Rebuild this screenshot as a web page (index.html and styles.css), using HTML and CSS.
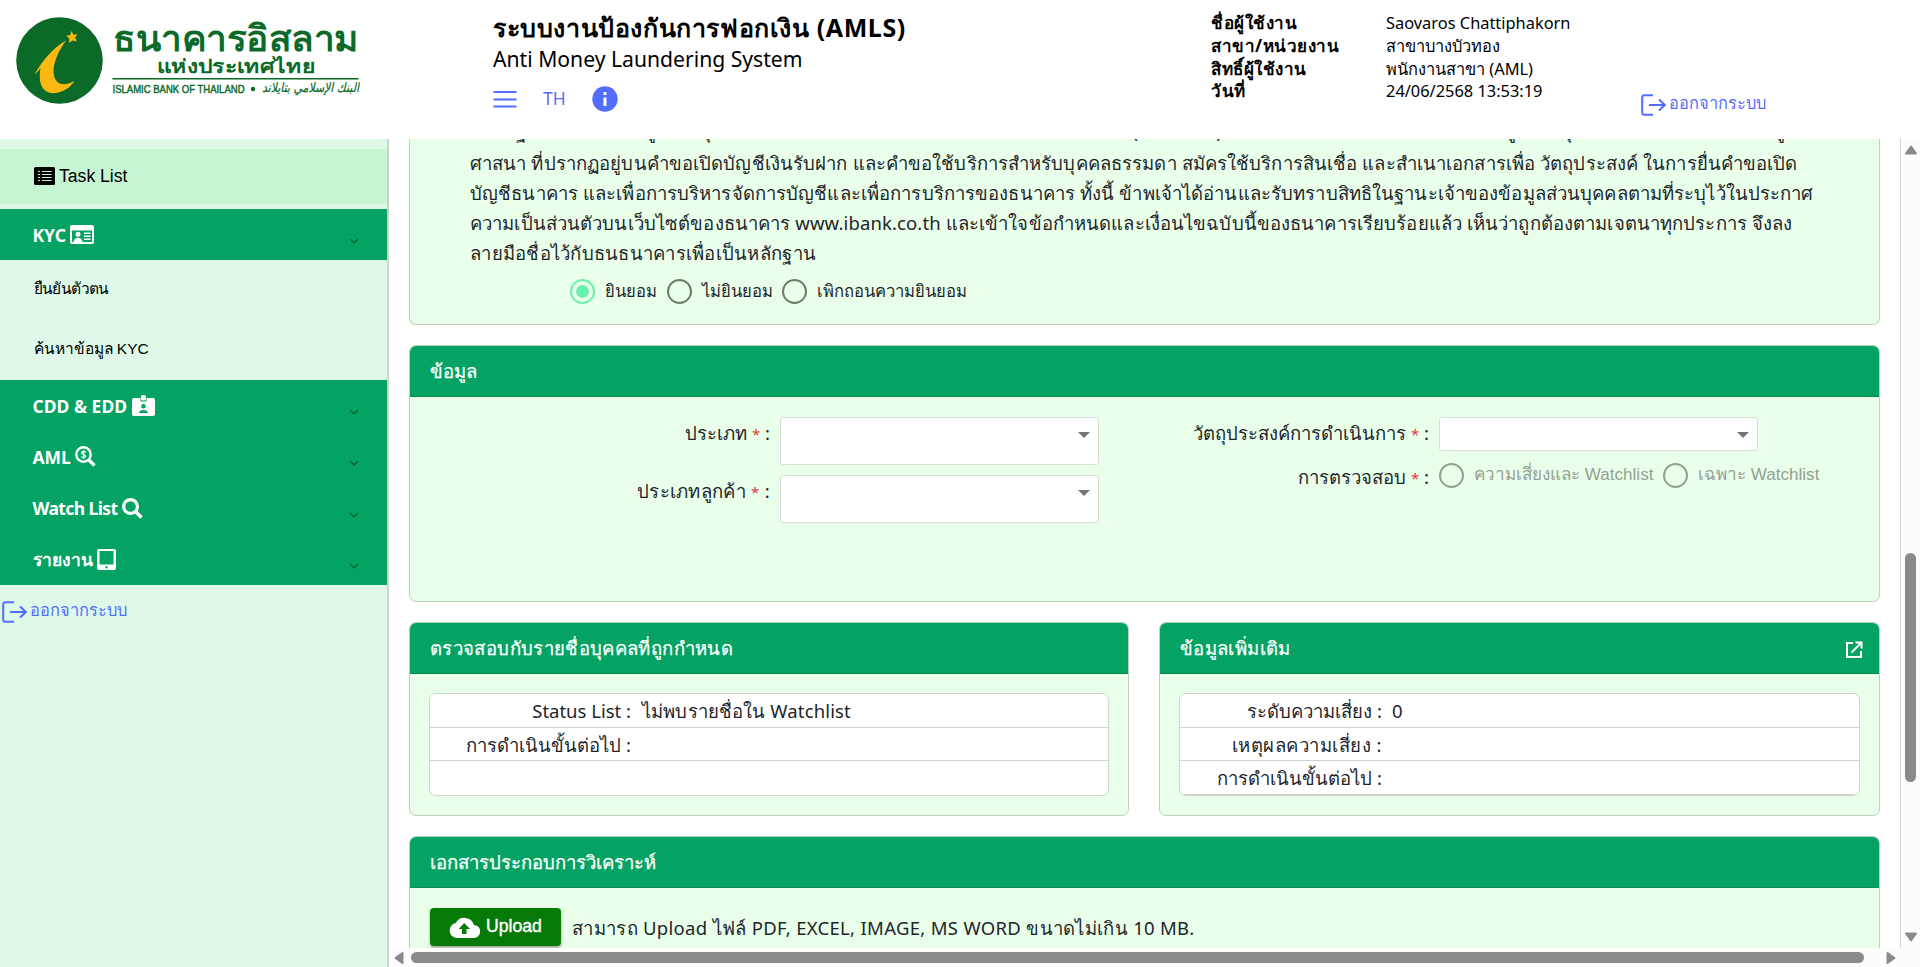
FILE: index.html
```html
<!DOCTYPE html>
<html lang="th">
<head>
<meta charset="utf-8">
<title>AMLS</title>
<link rel="stylesheet" href="styles.css">
</head>
<body>
<svg class="defs" width="0" height="0">
  <symbol id="i-logout" viewBox="0 0 26 22"><path d="M12 1.2H3.2a2 2 0 0 0-2 2v15.6a2 2 0 0 0 2 2H12" fill="none" stroke="currentColor" stroke-width="2"/><path d="M8 11h15.6M18 5.4 23.8 11 18 16.6" fill="none" stroke="currentColor" stroke-width="2.1"/></symbol>
  <symbol id="i-chev" viewBox="0 0 10 7"><path d="M1 1l4 4 4-4" fill="none" stroke="#0b5a22" stroke-width="1.2"/></symbol>
</svg>
<header class="top">
  <div class="brand">
    <svg width="360" height="110" viewBox="0 0 360 110">
      <circle cx="59.500" cy="60.500" r="43.300" fill="#0b6a27"/>
      <path d="M66 40.500C53 48 42 61 34.500 74.500c2-1.500 4-3.500 6-6.500-1.500 9-1 17 4 22 4 3.500 9 4 14 2.500 6-1.500 12-5.500 16-11.500-7 4-14 4.500-18 0-5-6-3-17 1-26 2.500-6 5.500-10 8.500-14.500Z" fill="#fdb913"/>
      <path d="M71.500 31l1.900 3.700 4.100-.4-2.400 3.300 1.700 3.900-4.200-1-3.600 2.200.2-4.200-3-2.700 4.100-.8Z" fill="#fdb913"/>
      <g fill="#0b6a27">
        <text x="113" y="51" textLength="246" lengthAdjust="spacingAndGlyphs" class="lg-a">ธนาคารอิสลาม</text>
        <text x="157" y="72.500" textLength="158" lengthAdjust="spacingAndGlyphs" class="lg-b">แห่งประเทศไทย</text>
        <rect x="112.500" y="78" width="246" height="1.500"/>
        <text x="112.500" y="92.500" textLength="132" lengthAdjust="spacingAndGlyphs" class="lg-c">ISLAMIC BANK OF THAILAND</text>
        <circle cx="253" cy="89" r="2.200"/>
        <text x="262" y="92" textLength="97" lengthAdjust="spacingAndGlyphs" class="lg-d">البنك الإسلامي بتايلاند</text>
      </g>
    </svg>
  </div>
  <div class="titles">
    <h1>ระบบงานป้องกันการฟอกเงิน (AMLS)</h1>
    <p class="sub">Anti Money Laundering System</p>
    <div class="tools">
      <svg width="24" height="18" viewBox="0 0 24 18"><path d="M.5 2h23M.5 9.500h23M.5 16.500h23" stroke="currentColor" stroke-width="2.200"/></svg>
      <span class="lang">TH</span>
      <svg width="26" height="26" viewBox="0 0 26 26"><circle cx="13" cy="13" r="12.700" fill="currentColor"/><path d="M11.500 6h3v3h-3zM11.500 11.500h3V20h-3z" fill="#fff"/></svg>
    </div>
  </div>
  <dl class="user">
    <dt>ชื่อผู้ใช้งาน</dt><dd>Saovaros Chattiphakorn</dd>
    <dt>สาขา/หน่วยงาน</dt><dd>สาขาบางบัวทอง</dd>
    <dt>สิทธิ์ผู้ใช้งาน</dt><dd>พนักงานสาขา (AML)</dd>
    <dt>วันที่</dt><dd>24/06/2568 13:53:19</dd>
  </dl>
  <a class="logout"><svg width="26" height="22"><use href="#i-logout"/></svg><span>ออกจากระบบ</span></a>
</header>
<div class="body">
  <nav class="side">
    <a class="task"><svg width="21" height="18" viewBox="0 0 21 18"><rect width="21" height="18" rx="1.500" fill="#000"/><path d="M4 4.500h2M8 4.500h9.500M4 7.500h2M8 7.500h9.500M4 10.500h2M8 10.500h9.500M4 13.500h2M8 13.500h9.500" stroke="#c5f5d2" stroke-width="1.200"/></svg><span>Task List</span></a>
    <a class="group kyc"><b>KYC</b>
      <svg width="24" height="19" viewBox="0 0 24 19"><path fill="#fff" fill-rule="evenodd" d="M2 0h20a2 2 0 0 1 2 2v15a2 2 0 0 1-2 2H2a2 2 0 0 1-2-2V2a2 2 0 0 1 2-2ZM2 5.500V17h20V5.500Z"/><circle cx="8" cy="9.300" r="2.500" fill="#fff"/><path d="M3.500 17.200c0-6 9-6 9 0ZM14 7.500h6.500V9H14zM14 10.500h6.500V12H14zM14 13.500h6.500V15H14z" fill="#fff"/></svg>
      <svg class="chev" width="10" height="7"><use href="#i-chev"/></svg></a>
    <div class="subs"><a class="s1">ยืนยันตัวตน</a><a class="s2">ค้นหาข้อมูล KYC</a></div>
    <a class="group"><b class="cdd">CDD &amp; EDD</b>
      <svg width="23" height="21" viewBox="0 0 23 21"><path fill="#fff" fill-rule="evenodd" d="M2 3h6.500v3.500h6V3H21a2 2 0 0 1 2 2v14a2 2 0 0 1-2 2H2a2 2 0 0 1-2-2V5a2 2 0 0 1 2-2Zm9.500 6a2.300 2.300 0 1 0 0 4.600 2.300 2.300 0 0 0 0-4.600ZM7 18h9c0-4-9-4-9 0Z"/><rect x="9" width="5" height="5.500" rx="1.500" fill="#fff"/></svg>
      <svg class="chev" width="10" height="7"><use href="#i-chev"/></svg></a>
    <a class="group"><b>AML</b>
      <svg width="21" height="21" viewBox="0 0 21 21"><circle cx="8.500" cy="8.500" r="7.200" fill="none" stroke="#fff" stroke-width="2.400"/><path d="M14 14l5.500 5.500" stroke="#fff" stroke-width="3.400"/><path d="M10.800 6.500C10 5 6.500 5 6.500 6.900c0 2 4.200 1.200 4.200 3.200 0 1.900-3.700 2-4.500.4M8.600 4v9" fill="none" stroke="#fff" stroke-width="1.300"/></svg>
      <svg class="chev" width="10" height="7"><use href="#i-chev"/></svg></a>
    <a class="group"><b class="watch">Watch List</b>
      <svg width="21" height="21" viewBox="0 0 21 21"><circle cx="8.500" cy="8.500" r="6.900" fill="none" stroke="#fff" stroke-width="3.200"/><path d="M13.500 13.500l6 6" stroke="#fff" stroke-width="3.600"/></svg>
      <svg class="chev" width="10" height="7"><use href="#i-chev"/></svg></a>
    <a class="group"><b>รายงาน</b>
      <svg width="19" height="21" viewBox="0 0 19 21"><path fill="#fff" fill-rule="evenodd" d="M2 0h15a2 2 0 0 1 2 2v17a2 2 0 0 1-2 2H2a2 2 0 0 1-2-2V2a2 2 0 0 1 2-2Zm.5 2v13.500h14V2Zm7 15a1.200 1.200 0 1 0 0 2.400 1.200 1.200 0 0 0 0-2.400Z"/></svg>
      <svg class="chev" width="10" height="7"><use href="#i-chev"/></svg></a>
    <a class="logout"><svg width="26" height="22"><use href="#i-logout"/></svg><span>ออกจากระบบ</span></a>
  </nav>
  <div class="frame">
    <div class="view">
      <main class="content">
        <section class="card consent">
          <p class="l1">จำนนฐานะเจ้าของ ข้อมูลส่วนบุคคลให้ความยินยอมแก่ธนาคารอิสลามแห่งประเทศไทย ("ธนาคาร") ในการดำเนินการเก็บรวบรวม ใช้ ข้อมูลส่วนบุคคลของข้าพเจ้า ได้แก่ ข้อมูล</p>
          <p>ศาสนา ที่ปรากฏอยู่บนคำขอเปิดบัญชีเงินรับฝาก และคำขอใช้บริการสำหรับบุคคลธรรมดา สมัครใช้บริการสินเชื่อ และสำเนาเอกสารเพื่อ วัตถุประสงค์ ในการยื่นคำขอเปิด</p>
          <p>บัญชีธนาคาร และเพื่อการบริหารจัดการบัญชีและเพื่อการบริการของธนาคาร ทั้งนี้ ข้าพเจ้าได้อ่านและรับทราบสิทธิในฐานะเจ้าของข้อมูลส่วนบุคคลตามที่ระบุไว้ในประกาศ</p>
          <p>ความเป็นส่วนตัวบนเว็บไซต์ของธนาคาร www.ibank.co.th และเข้าใจข้อกำหนดและเงื่อนไขฉบับนี้ของธนาคารเรียบร้อยแล้ว เห็นว่าถูกต้องตามเจตนาทุกประการ จึงลง</p>
          <p class="l5">ลายมือชื่อไว้กับธนธนาคารเพื่อเป็นหลักฐาน</p>
          <div class="radios">
            <i class="rd on"></i><span>ยินยอม</span>
            <i class="rd"></i><span>ไม่ยินยอม</span>
            <i class="rd"></i><span>เพิกถอนความยินยอม</span>
          </div>
        </section>
        <section class="card info">
          <h2>ข้อมูล</h2>
          <div class="form">
            <div class="col">
              <div class="field"><label>ประเภท <em>*</em> :</label><div class="select tall"><i class="caret"></i></div></div>
              <div class="field"><label class="cust">ประเภทลูกค้า <em>*</em> :</label><div class="select tall"><i class="caret"></i></div></div>
            </div>
            <div class="col right">
              <div class="field"><label>วัตถุประสงค์การดำเนินการ <em>*</em> :</label><div class="select"><i class="caret"></i></div></div>
              <div class="field check"><label>การตรวจสอบ <em>*</em> :</label>
                <div class="radios off"><i class="rd"></i><span>ความเสี่ยงและ Watchlist</span><i class="rd"></i><span>เฉพาะ Watchlist</span></div></div>
            </div>
          </div>
        </section>
        <div class="pair">
          <section class="card">
            <h2 class="spaced">ตรวจสอบกับรายชื่อบุคคลที่ถูกกำหนด</h2>
            <div class="tbl">
              <div class="row"><span class="k">Status List :</span><span class="v">ไม่พบรายชื่อใน Watchlist</span></div>
              <div class="row"><span class="k">การดำเนินขั้นต่อไป :</span></div>
              <div class="row"></div>
            </div>
          </section>
          <section class="card">
            <h2 class="spaced">ข้อมูลเพิ่มเติม<svg class="open" width="18" height="18" viewBox="0 0 18 18"><path d="M8 2H2v14h14v-6M10.500 1.500H16.500V7.500M16 2 6.500 11.500" fill="none" stroke="#fff" stroke-width="2"/></svg></h2>
            <div class="tbl wide">
              <div class="row"><span class="k">ระดับความเสี่ยง :</span><span class="v">0</span></div>
              <div class="row"><span class="k reason">เหตุผลความเสี่ยง :</span></div>
              <div class="row last"><span class="k">การดำเนินขั้นต่อไป :</span></div>
            </div>
          </section>
        </div>
        <section class="card docs">
          <h2>เอกสารประกอบการวิเคราะห์</h2>
          <div class="upl">
            <button class="btn"><svg width="31" height="21" viewBox="0 0 31 21"><path fill="#fff" fill-rule="evenodd" d="M25 8A10 10 0 0 0 6.700 6 7.600 7.600 0 0 0 7.600 21H24.500A6.500 6.500 0 0 0 25 8ZM17.500 12v5h-4.500v-5H9.700L15.250 6 21 12Z"/></svg><span>Upload</span></button>
            <span class="hint">สามารถ Upload ไฟล์ PDF, EXCEL, IMAGE, MS WORD ขนาดไม่เกิน 10 MB.</span>
          </div>
        </section>
      </main>
      <div class="vbar">
        <svg width="14" height="10" viewBox="0 0 14 10"><path d="M7 1.500 12 8.500H2Z" fill="#8a8a8a" stroke="#8a8a8a" stroke-width="2" stroke-linejoin="round"/></svg>
        <i class="vthumb"></i>
        <svg width="14" height="10" viewBox="0 0 14 10"><path d="M7 8.500 12 1.500H2Z" fill="#8a8a8a" stroke="#8a8a8a" stroke-width="2" stroke-linejoin="round"/></svg>
      </div>
    </div>
    <div class="hbar">
      <svg width="10" height="14" viewBox="0 0 10 14"><path d="M1.500 7 8.500 2V12Z" fill="#8a8a8a" stroke="#8a8a8a" stroke-width="2" stroke-linejoin="round"/></svg>
      <i class="hthumb"></i>
      <svg width="10" height="14" viewBox="0 0 10 14"><path d="M8.500 7 1.500 2V12Z" fill="#8a8a8a" stroke="#8a8a8a" stroke-width="2" stroke-linejoin="round"/></svg>
    </div>
  </div>
</div>
</body>
</html>
```
FILE: styles.css
```css
*{box-sizing:border-box}
body{margin:0;width:1920px;height:967px;overflow:hidden;display:flex;flex-direction:column;background:#fff;color:#212529;font-family:"Noto Sans",sans-serif;font-size:18.5px;line-height:30px}
h1,h2,p,dl,dd{margin:0}
svg{display:block;flex:none}
.defs{display:none}
i,em{font-style:normal}
.top{height:139px;flex:none;display:flex;color:#000}
.brand{width:493px;flex:none}
.lg-a{font-size:36px;font-weight:700}
.lg-b{font-size:19px;font-weight:700}
.lg-c{font:500 11.5px "Liberation Sans",sans-serif;stroke:#0b6a27;stroke-width:.45px}
.lg-d{font:italic 13px "DejaVu Sans",sans-serif;stroke:#0b6a27;stroke-width:.2px}
.titles{width:718px;flex:none;padding-top:11px}
h1{font-size:25px;line-height:32px;font-weight:700;letter-spacing:.6px;white-space:nowrap;width:max-content}
.sub{font-size:21.15px;line-height:32px;width:max-content}
.tools{display:flex;align-items:center;height:26px;margin-top:11px;color:#536dfe}
.lang{margin:-3px 26px 0;font-size:17.5px;line-height:26px}
.user{display:grid;grid-template-columns:175px 255px;grid-auto-rows:22.8px;align-content:start;padding-top:12px;font-size:16.4px;line-height:22.8px;flex:none;white-space:nowrap}
.user dt{font-weight:700;font-size:17px;letter-spacing:.5px}
.logout{display:flex;align-items:center;gap:2px;height:22px;color:#536dfe;font-size:16.4px;line-height:22px;white-space:nowrap}
.logout span{margin-top:-4px}
.top .logout{margin-top:94px}
.body{flex:1;display:flex;min-height:0}
.side{width:389px;flex:none;background:#def9e8;border-right:2px solid #d0d0d0;padding-top:10px;color:#000}
.task{display:flex;align-items:center;gap:4px;height:55px;padding:0 0 2px 34px;background:#c5f5d2;font:17.6px/55px "Liberation Sans",sans-serif}
.task span{margin-top:1px}
.group{display:flex;align-items:center;gap:4px;height:51.25px;padding:0 28px 0 32.5px;background:#04a263;color:#fff;font-size:17.5px}
.cdd{margin-right:1px}
.watch{letter-spacing:-.6px}
.kyc{margin-top:5px;height:51px}
.chev{margin-left:auto;margin-top:14px}
.subs{height:120px;display:flex;flex-direction:column;padding-left:33.5px;font:15.5px/57px "Liberation Sans",sans-serif}
.subs a{height:60px;width:max-content}
.s1{letter-spacing:-.6px}
.side .logout{margin:16px 0 0 2px}
.frame{flex:1;display:flex;flex-direction:column;min-width:0}
.view{flex:1;display:flex;min-height:0}
.content{flex:1;min-width:0;overflow:hidden;padding:0 20px;display:flex;flex-direction:column;gap:20px}
.card{border:1px solid #bcd0bc;border-radius:7px;background:#eaffea;flex:none;overflow:hidden}
.card h2{height:51px;padding:0 17px 0 20px;display:flex;justify-content:space-between;align-items:center;background:#04a263;border-bottom:1px solid #048a55;color:#fff;font-size:18.5px;font-weight:500;line-height:50px;-webkit-text-stroke:.25px #fff}
.card h2.spaced{letter-spacing:.36px}
.open{margin-top:3px;margin-right:-1px}
.consent{height:186px;border-top:0;border-radius:0 0 7px 7px;padding:0 60px}
.consent p{height:30px;white-space:nowrap;width:max-content;letter-spacing:.115px}
.consent .l1{margin-top:-21px;line-height:26px;letter-spacing:-.31px}
.consent .l5{letter-spacing:.26px}
.radios{display:flex;align-items:center;height:26px;font-size:16.6px;white-space:nowrap}
.consent .radios{padding-left:100px;margin-top:10px}
.rd{width:25px;height:25px;border:2px solid #6d7b6d;border-radius:50%;margin-right:10px;flex:none}
.rd.on{border-color:#69f0ae;padding:4px}
.rd.on::before{content:"";display:block;width:13px;height:13px;border-radius:50%;background:#69f0ae}
.radios span{display:block;margin-right:9.5px}
.off{color:#93a193;font-family:"Liberation Sans",sans-serif;font-size:17.1px}
.off .rd{border-color:#93a193}
.off span{line-height:32px}
.info{height:257px}
.form{display:flex;padding-top:20px}
.col{width:690px;display:flex;flex-direction:column;gap:10px}
.field{display:flex}
.field label{width:360px;text-align:right;margin-right:10px;line-height:31px;white-space:nowrap}
.field .cust{letter-spacing:.3px}
.right .field label{width:329px}
em{color:#e0393e;font-size:15px}
.select{width:319px;height:34px;border:1px solid #d8dcd8;border-radius:3px;background:#fff;padding:14px 8px;display:flex;justify-content:flex-end}
.tall{height:48px}
.caret{border:6px solid transparent;border-top-color:#757575;border-bottom:0;height:0}
.right{width:auto}
.check{height:40px}
.check .radios{margin-top:1px}
.pair{display:grid;grid-template-columns:720px 721px;column-gap:30px}
.pair .card{height:194px}
.tbl{margin:19px 19px 0;height:103px;border:1px solid #cfd3cf;border-radius:7px;background:#fff;overflow:hidden}
.row{display:flex;height:33.500px;border-bottom:1px solid #cfd3cf;line-height:33px;white-space:nowrap}
.row:last-child{border:0}
.row.last{border-bottom:1px solid #cfd3cf}
.k{width:201px;text-align:right;margin-right:11px}
.v{letter-spacing:.13px}
.wide .k{width:202px;margin-right:10px}
.reason{letter-spacing:.5px}
.docs{height:160px}
.upl{display:flex;align-items:flex-start;padding:20px 20px}
.btn{width:131px;height:38px;border:0;border-radius:4px;background:#067a06;color:#fff;display:flex;align-items:center;justify-content:center;gap:6px;padding:0;font:500 17.6px "Liberation Sans",sans-serif;-webkit-text-stroke:.4px #fff;box-shadow:0 2px 3px rgba(0,0,0,.35)}
.btn span{margin-top:-2px}
.hint{margin:5px 0 0 11px;white-space:nowrap;letter-spacing:.31px}
.vbar{width:20px;border-left:1px solid #d4d4d4;background:#fcfcfc;display:flex;flex-direction:column;align-items:center;padding:6px 0}
.vthumb{width:11px;height:229px;border-radius:6px;background:#8a8a8a;margin:398px 0 150px}
.hbar{height:19px;flex:none;background:#fcfcfc;display:flex;align-items:center;padding-left:5px}
.hthumb{width:1453px;height:11px;border-radius:6px;background:#8a8a8a;margin:0 22px 0 7px}
```
